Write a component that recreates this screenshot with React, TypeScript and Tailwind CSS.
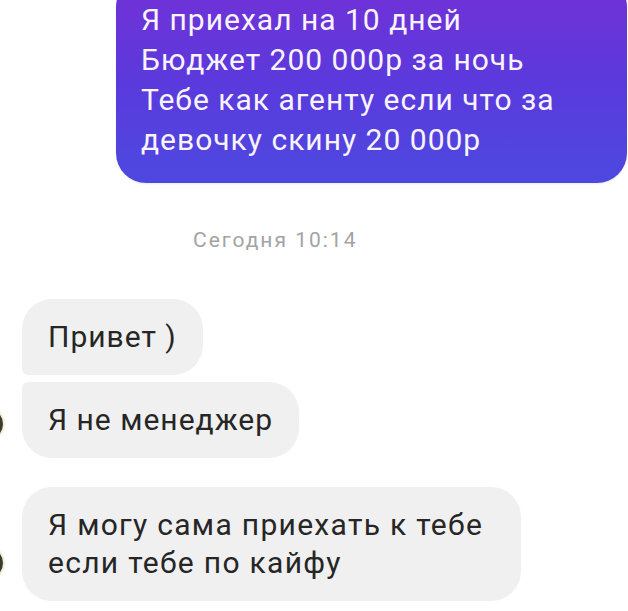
import React from 'react';

const font = "font-['Roboto','Noto_Sans',sans-serif]";

export default function App() {
  return (
    <div className={`w-[628px] h-[611px] overflow-hidden bg-white ${font}`}>
      {/* outgoing message, top cut off */}
      <div className="mt-[-23px] ml-[116px] mr-[1px] rounded-[30px] bg-linear-to-b from-[#7330d6] via-[#5b39dc] to-[#4c48e0] pl-[25px] pr-4 pt-[23px] pb-[23px] text-[30px] leading-[40px] tracking-[1px] text-[#f7f3ff] shadow-[0_1px_2px_rgba(0,0,0,0.08)]">
        <div>Я приехал на 10 дней</div>
        <div>Бюджет 200 000р за ночь</div>
        <div>Тебе как агенту если что за</div>
        <div>девочку скину 20 000р</div>
      </div>

      <div className="mt-[45px] pl-[193px] text-[21px] leading-[24px] tracking-[2px] text-[#a3a3a3]">Сегодня 10:14</div>

      {/* incoming group 1 */}
      <div className="mt-[47px] flex items-end">
        <div className="-ml-[29px] mb-[18px] mr-[19px] h-8 w-8 shrink-0 rounded-full bg-[#3a3a30] ring-2 ring-[#f4f1d8]" />
        <div className="flex flex-col items-start gap-[7px]">
          <div className="rounded-[30px] rounded-bl-[6px] bg-[#f0f0f0] px-[26px] py-[19px] text-[30px] leading-[38px] tracking-[1px] text-[#262626]">
            Привет )
          </div>
          <div className="rounded-[30px] rounded-tl-[6px] bg-[#f0f0f0] px-[26px] py-[19px] text-[30px] leading-[38px] tracking-[1px] text-[#262626]">
            Я не менеджер
          </div>
        </div>
      </div>

      {/* incoming group 2 */}
      <div className="mt-[29px] flex items-end">
        <div className="-ml-[29px] mb-[22px] mr-[19px] h-8 w-8 shrink-0 rounded-full bg-[#3a3a30] ring-2 ring-[#f4f1d8]" />
        <div className="rounded-[30px] bg-[#f0f0f0] pl-[26px] pr-[38px] py-[19px] text-[30px] leading-[38px] tracking-[1.3px] text-[#262626]">
          <div>Я могу сама приехать к тебе</div>
          <div>если тебе по кайфу</div>
        </div>
      </div>
    </div>
  );
}
